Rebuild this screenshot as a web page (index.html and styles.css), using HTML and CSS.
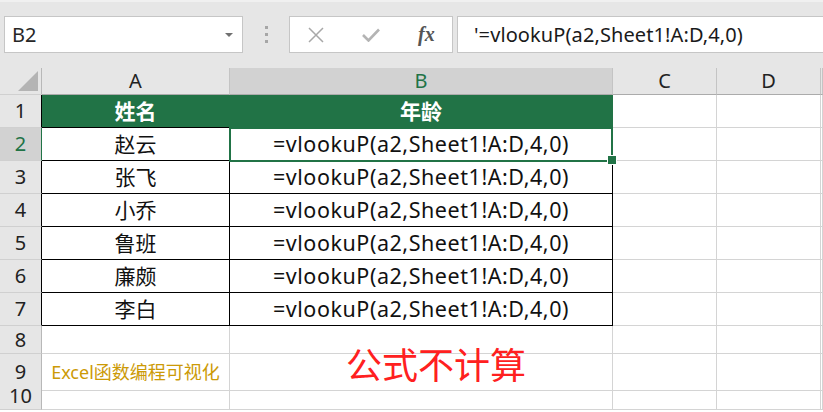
FILE: index.html
```html
<!DOCTYPE html>
<html lang="zh-CN">
<head>
    <meta charset="UTF-8">
    <title>Excel</title>
    <link rel="stylesheet" href="styles.css">
</head>
<body>
    <!-- Formula bar -->
    <div class="toolbar">
        <div class="name-box">
            <span>B2</span>
            <i class="caret"></i>
        </div>
        <div class="grip"><i></i><i></i><i></i></div>
        <div class="fx-box">
            <svg class="ico" width="16" height="16" viewBox="0 0 16 16"><path d="M1 1 L15 15 M15 1 L1 15" stroke="#a8a8a8" stroke-width="1.5" fill="none"/></svg>
            <svg class="ico" width="18" height="14" viewBox="0 0 18 14"><path d="M1 7 L6.5 12.5 L17 1.5" stroke="#b4b4b4" stroke-width="2.6" fill="none"/></svg>
            <span class="fx">fx</span>
        </div>
        <div class="formula">'=vlookuP(a2,Sheet1!A:D,4,0)</div>
    </div>

    <!-- Sheet -->
    <div class="sheet">
        <div class="row head">
            <div class="rh corner"><i></i></div>
            <div class="ch">A</div>
            <div class="ch on">B</div>
            <div class="ch">C</div>
            <div class="ch">D</div>
            <div class="ch"></div>
        </div>
        <div class="row tall">
            <div class="rh edge">1</div>
            <div class="cell title">姓名</div>
            <div class="cell title">年龄</div>
            <div></div><div></div><div></div>
        </div>
        <div class="row tall">
            <div class="rh on">2</div>
            <div class="cell">赵云</div>
            <div class="cell fm sel">=vlookuP(a2,Sheet1!A:D,4,0)</div>
            <div></div><div></div><div></div>
        </div>
        <div class="row tall">
            <div class="rh edge">3</div>
            <div class="cell">张飞</div>
            <div class="cell fm">=vlookuP(a2,Sheet1!A:D,4,0)</div>
            <div></div><div></div><div></div>
        </div>
        <div class="row tall">
            <div class="rh edge">4</div>
            <div class="cell">小乔</div>
            <div class="cell fm">=vlookuP(a2,Sheet1!A:D,4,0)</div>
            <div></div><div></div><div></div>
        </div>
        <div class="row tall">
            <div class="rh edge">5</div>
            <div class="cell">鲁班</div>
            <div class="cell fm">=vlookuP(a2,Sheet1!A:D,4,0)</div>
            <div></div><div></div><div></div>
        </div>
        <div class="row tall">
            <div class="rh edge">6</div>
            <div class="cell">廉颇</div>
            <div class="cell fm">=vlookuP(a2,Sheet1!A:D,4,0)</div>
            <div></div><div></div><div></div>
        </div>
        <div class="row tall">
            <div class="rh edge">7</div>
            <div class="cell">李白</div>
            <div class="cell fm">=vlookuP(a2,Sheet1!A:D,4,0)</div>
            <div></div><div></div><div></div>
        </div>
        <div class="row">
            <div class="rh">8</div>
            <div></div><div></div><div></div><div></div><div></div>
        </div>
        <div class="row">
            <div class="rh">9</div>
            <div class="brand">Excel函数编程可视化</div>
            <div class="note"><span>公式不计算</span></div>
            <div></div><div></div><div></div>
        </div>
        <div class="row">
            <div class="rh">10</div>
            <div></div><div></div><div></div><div></div><div></div>
        </div>
    </div>
</body>
</html>
```

FILE: styles.css
```css
body {
    margin: 0;
    width: 823px;
    height: 412px;
    overflow: hidden;
    background: #fff;
    font-family: "Noto Sans", "Noto Sans CJK SC", sans-serif;
    color: #1a1a1a;
}
* {
    box-sizing: border-box;
}

/* formula bar */
.toolbar {
    height: 68px;
    background: #e6e6e6;
    display: flex;
    align-items: flex-start;
    padding: 16px 0 0 4px;
    border-top: 2px solid #f0f0f0;
}
.name-box {
    width: 239px;
    height: 37px;
    margin-top: -2px;
    background: #fff;
    border: 1px solid #c6c6c6;
    display: flex;
    align-items: center;
    justify-content: space-between;
    padding: 0 9px 0 7px;
    font-size: 20px;
    color: #262626;
}
.caret {
    width: 0;
    height: 0;
    border-left: 4px solid transparent;
    border-right: 4px solid transparent;
    border-top: 4px solid #707070;
}
.grip {
    width: 46px;
    height: 37px;
    margin-top: -2px;
    display: flex;
    flex-direction: column;
    align-items: center;
    justify-content: center;
    gap: 4px;
}
.grip i {
    width: 3px;
    height: 3px;
    background: #a6a6a6;
}
.fx-box {
    width: 164px;
    height: 37px;
    margin-top: -2px;
    background: #fff;
    border: 1px solid #c6c6c6;
    display: flex;
    align-items: center;
    padding: 0 0 0 18px;
}
.fx-box .ico:first-child {
    margin-right: 38px;
}
.fx-box .ico:nth-child(2) {
    margin-right: 38px;
}
.fx {
    font-family: "Liberation Serif", serif;
    font-style: italic;
    font-weight: bold;
    font-size: 20px;
    color: #555;
}
.formula {
    flex: 1;
    height: 37px;
    margin: -2px -2px 0 4px;
    background: #fff;
    border: 1px solid #c6c6c6;
    display: flex;
    align-items: center;
    padding-left: 16px;
    font-size: 20px;
    letter-spacing: 0.1px;
    color: #1a1a1a;
}

/* grid */
.row {
    display: grid;
    grid-template-columns: 42px 188px 383px 104px 104px 1fr;
    height: 28px;
}
.row.tall {
    height: 33px;
}
.row.head {
    height: 27px;
}
.row > div {
    border-right: 1px solid #d4d4d4;
    border-bottom: 1px solid #d4d4d4;
    display: flex;
    align-items: center;
    justify-content: center;
    font-size: 20px;
    line-height: 1;
    white-space: nowrap;
}
.row > .rh {
    background: #e6e6e6;
    border-right: 1px solid #b8b8b8;
    border-bottom: 1px solid #d0d0d0;
    color: #222;
}
.row > .rh.edge {
    border-right-color: #000;
}
.row > .rh.on {
    background: #d2d2d2;
    color: #217346;
    border-right: 1px solid #217346;
}
.row > .ch {
    background: #e6e6e6;
    border-right: 1px solid #c4c4c4;
    border-bottom: 1px solid #ababab;
    color: #222;
}
.row > .ch.on {
    background: #d2d2d2;
    color: #217346;
}
.corner {
    position: relative;
}
.corner i {
    position: absolute;
    right: 3px;
    bottom: 3px;
    width: 0;
    height: 0;
    border-left: 20px solid transparent;
    border-bottom: 20px solid #b4b4b4;
}
.row > .cell {
    border-right-color: #000;
    border-bottom-color: #000;
    font-size: 21px;
    color: #111;
}
.row > .cell.fm {
    font-size: 21.5px;
    letter-spacing: 0.55px;
}
.row > .cell.title {
    background: #217346;
    border-right-color: #217346;
    color: #fff;
    font-weight: bold;
}
.sel {
    position: relative;
}
.sel::before {
    content: "";
    position: absolute;
    top: -1px;
    left: -1px;
    right: -1px;
    bottom: -2px;
    border: 2px solid #217346;
}
.sel::after {
    content: "";
    position: absolute;
    right: -5px;
    bottom: -5px;
    width: 8px;
    height: 8px;
    background: #217346;
    border: 1px solid #fff;
}
.row > .brand {
    font-size: 18px;
    color: #cc9a06;
}
.row > .note {
    justify-content: flex-start;
    padding-left: 116px;
}
.note span {
    position: relative;
    top: -9px;
    font-size: 36px;
    line-height: 1;
    color: #ff2020;
    font-family: "Noto Sans CJK SC", sans-serif;
}
```
